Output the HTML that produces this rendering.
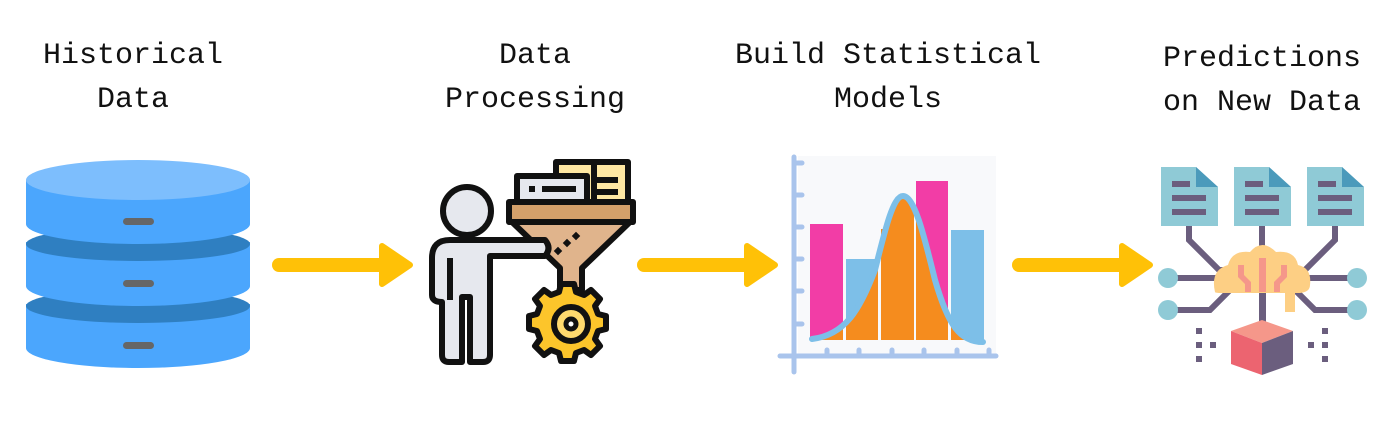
<!DOCTYPE html>
<html><head><meta charset="utf-8"><style>
html,body{margin:0;padding:0;background:#fff;width:1400px;height:425px;overflow:hidden;position:relative}
.t{position:absolute;font-family:"Liberation Mono",monospace;font-size:30px;line-height:44px;color:#111;text-align:center;white-space:pre;transform:translateX(-50%)}
svg{position:absolute;left:0;top:0}
</style></head><body>
<div class="t" style="left:133px;top:34px">Historical
Data</div>
<div class="t" style="left:535px;top:34px">Data
Processing</div>
<div class="t" style="left:888px;top:34px">Build Statistical
Models</div>
<div class="t" style="left:1262px;top:37px">Predictions
on New Data</div>
<svg width="1400" height="425" viewBox="0 0 1400 425">
<!-- database -->
<g>
<path d="M26 304 v44 a112 20 0 0 0 224 0 v-44 z" fill="#4BA6FD"/>
<ellipse cx="138" cy="306" rx="112" ry="17" fill="#2F7FC1"/>
<path d="M26 242 v44 a112 20 0 0 0 224 0 v-44 z" fill="#4BA6FD"/>
<ellipse cx="138" cy="244" rx="112" ry="17" fill="#2F7FC1"/>
<path d="M26 180 v44 a112 20 0 0 0 224 0 v-44 z" fill="#4BA6FD"/>
<ellipse cx="138" cy="180" rx="112" ry="20" fill="#7DBEFD"/>
<rect x="123" y="218" width="31" height="7" rx="3.5" fill="#666"/>
<rect x="123" y="280" width="31" height="7" rx="3.5" fill="#666"/>
<rect x="123" y="342" width="31" height="7" rx="3.5" fill="#666"/>
</g>
<!-- arrows -->
<g fill="#FFC107" stroke="#FFC107" stroke-linejoin="round" stroke-linecap="round">
<line x1="279" y1="265" x2="385" y2="265" stroke-width="14"/>
<path d="M382 246 L410 265 L382 284 Z" stroke-width="6"/>
<line x1="644" y1="265" x2="750" y2="265" stroke-width="14"/>
<path d="M747 246 L775 265 L747 284 Z" stroke-width="6"/>
<line x1="1019" y1="265" x2="1125" y2="265" stroke-width="14"/>
<path d="M1122 246 L1150 265 L1122 284 Z" stroke-width="6"/>
</g>
<!-- processing icon -->
<g stroke="#111" stroke-width="6" stroke-linejoin="round">
<rect x="556" y="162" width="72" height="40" fill="#FFE8A3"/>
<line x1="594" y1="180" x2="618" y2="180"/><line x1="594" y1="192" x2="618" y2="192"/>
<line x1="594" y1="165" x2="594" y2="200"/>
<rect x="517" y="176" width="70" height="26" fill="#E6E8EE"/>
<line x1="529" y1="189" x2="535" y2="189"/><line x1="542" y1="189" x2="576" y2="189"/>
<path d="M512 222 L630 222 L582 268 L582 290 L560 290 L560 268 Z" fill="#E0B48C"/>
<rect x="509" y="202" width="124" height="20" fill="#D4A06A"/>
<path d="M568 284 l6 0 l2 8 l8 3 l7 -5 l9 9 l-5 7 l3 8 l8 2 l0 13 l-8 2 l-3 8 l5 7 l-9 9 l-7 -5 l-8 3 l-2 8 l-13 0 l-2 -8 l-8 -3 l-7 5 l-9 -9 l5 -7 l-3 -8 l-8 -2 l0 -13 l8 -2 l3 -8 l-5 -7 l9 -9 l7 5 l8 -3 l2 -8 z" fill="#FCC52B"/>
<circle cx="571" cy="324" r="17" fill="#FFDA6E"/>
<circle cx="571" cy="324" r="5" fill="#fff" stroke-width="5"/>
<circle cx="467" cy="211" r="24" fill="#E6E8EE"/>
<path d="M450 240 L545 240 Q552 248 545 256 L490 256 L490 355 Q490 362 483 362 L470 362 L470 297 L462 297 L462 362 L449 362 Q442 362 442 355 L442 302 Q432 302 432 295 L432 258 Q432 240 450 240 Z" fill="#E6E8EE"/>
<line x1="450" y1="258" x2="450" y2="300"/>
</g>
<g fill="#111"><rect x="555" y="248" width="6" height="6" transform="rotate(45 558 251)"/><rect x="564" y="240" width="6" height="6" transform="rotate(45 567 243)"/><rect x="573" y="233" width="6" height="6" transform="rotate(45 576 236)"/></g>
<!-- chart -->
<defs><clipPath id="bars"><rect x="810" y="150" width="33" height="190"/><rect x="846" y="150" width="32" height="190"/><rect x="881" y="150" width="33" height="190"/><rect x="916" y="150" width="32" height="190"/><rect x="951" y="150" width="33" height="190"/></clipPath></defs>
<rect x="798" y="156" width="198" height="198" fill="#F8F9FB"/>
<rect x="810" y="224" width="33" height="116" fill="#F23DA6"/>
<rect x="846" y="259" width="32" height="81" fill="#7DBFE8"/>
<rect x="881" y="229" width="33" height="111" fill="#F58C1E"/>
<rect x="916" y="181" width="32" height="159" fill="#F23DA6"/>
<rect x="951" y="230" width="33" height="110" fill="#7DBFE8"/>
<path d="M812 339 C845 335 860 310 875 270 C885 230 893 196 903 196 C915 196 925 240 935 280 C948 325 960 342 983 342 L983 340 L812 340 Z" fill="#F58C1E" clip-path="url(#bars)"/>
<path d="M812 339 C845 335 860 310 875 270 C885 230 893 196 903 196 C915 196 925 240 935 280 C948 325 960 342 983 342" fill="none" stroke="#7DBFE8" stroke-width="6" stroke-linecap="round"/>
<g stroke="#A9C4EC" stroke-width="5" stroke-linecap="round">
<line x1="794" y1="157" x2="794" y2="372"/><line x1="780" y1="356" x2="996" y2="356"/>
<line x1="794" y1="163" x2="802" y2="163"/><line x1="794" y1="195" x2="802" y2="195"/><line x1="794" y1="227" x2="802" y2="227"/><line x1="794" y1="259" x2="802" y2="259"/><line x1="794" y1="291" x2="802" y2="291"/><line x1="794" y1="324" x2="802" y2="324"/>
<line x1="827" y1="350" x2="827" y2="356"/><line x1="859" y1="350" x2="859" y2="356"/><line x1="892" y1="350" x2="892" y2="356"/><line x1="924" y1="350" x2="924" y2="356"/><line x1="957" y1="350" x2="957" y2="356"/><line x1="989" y1="350" x2="989" y2="356"/>
</g>
<!-- prediction icon -->
<g stroke="#6B5E7E" stroke-width="6" fill="none">
<path d="M1189 226 v14 l30 30 h15"/><path d="M1262 226 v20"/><path d="M1335 226 v14 l-30 30 h-15"/>
<path d="M1170 278 h50"/><path d="M1170 310 h40 l25 -25"/><path d="M1305 278 h50"/><path d="M1355 310 h-40 l-25 -25"/>
<path d="M1262 285 v50"/>
</g>
<g fill="#8FCAD6"><circle cx="1168" cy="278" r="10"/><circle cx="1168" cy="310" r="10"/><circle cx="1357" cy="278" r="10"/><circle cx="1357" cy="310" r="10"/></g>
<g>
<path d="M1161 167 h35 l22 20 v39 h-57 z" fill="#8FCAD6"/><path d="M1196 167 l22 20 h-22 z" fill="#4B9ABB"/>
<path d="M1234 167 h35 l22 20 v39 h-57 z" fill="#8FCAD6"/><path d="M1269 167 l22 20 h-22 z" fill="#4B9ABB"/>
<path d="M1307 167 h35 l22 20 v39 h-57 z" fill="#8FCAD6"/><path d="M1342 167 l22 20 h-22 z" fill="#4B9ABB"/>
<g fill="#6B5E7E"><rect x="1172" y="181" width="18" height="6"/><rect x="1172" y="195" width="34" height="6"/><rect x="1172" y="209" width="34" height="6"/>
<rect x="1245" y="181" width="18" height="6"/><rect x="1245" y="195" width="34" height="6"/><rect x="1245" y="209" width="34" height="6"/>
<rect x="1318" y="181" width="18" height="6"/><rect x="1318" y="195" width="34" height="6"/><rect x="1318" y="209" width="34" height="6"/></g>
</g>
<path d="M1215 292 Q1210 270 1228 265 Q1232 250 1250 252 Q1262 238 1276 252 Q1295 250 1298 265 Q1312 268 1310 285 Q1310 292 1300 293 L1295 293 L1295 312 L1285 312 L1285 293 L1222 293 Q1215 293 1215 292 Z" fill="#FDCF84"/>
<g fill="#F5978A"><rect x="1259" y="258" width="7" height="34"/><path d="M1238 265 h6 v10 l7 7 v10 h-6 v-8 l-7 -7 z"/><path d="M1287 265 h-6 v10 l-7 7 v10 h6 v-8 l7 -7 z"/></g>
<rect x="1259" y="293" width="7" height="30" fill="#6B5E7E"/>
<path d="M1231 331 L1262 320 L1293 331 L1262 343 Z" fill="#F5978A"/>
<path d="M1231 331 L1262 343 L1262 375 L1231 364 Z" fill="#EC6470"/>
<path d="M1293 331 L1262 343 L1262 375 L1293 364 Z" fill="#6B5E7E"/>
<g fill="#6B5E7E"><rect x="1196" y="328" width="6" height="6"/><rect x="1196" y="342" width="6" height="6"/><rect x="1210" y="342" width="6" height="6"/><rect x="1196" y="356" width="6" height="6"/>
<rect x="1322" y="328" width="6" height="6"/><rect x="1322" y="342" width="6" height="6"/><rect x="1308" y="342" width="6" height="6"/><rect x="1322" y="356" width="6" height="6"/></g>
</svg>
</body></html>
